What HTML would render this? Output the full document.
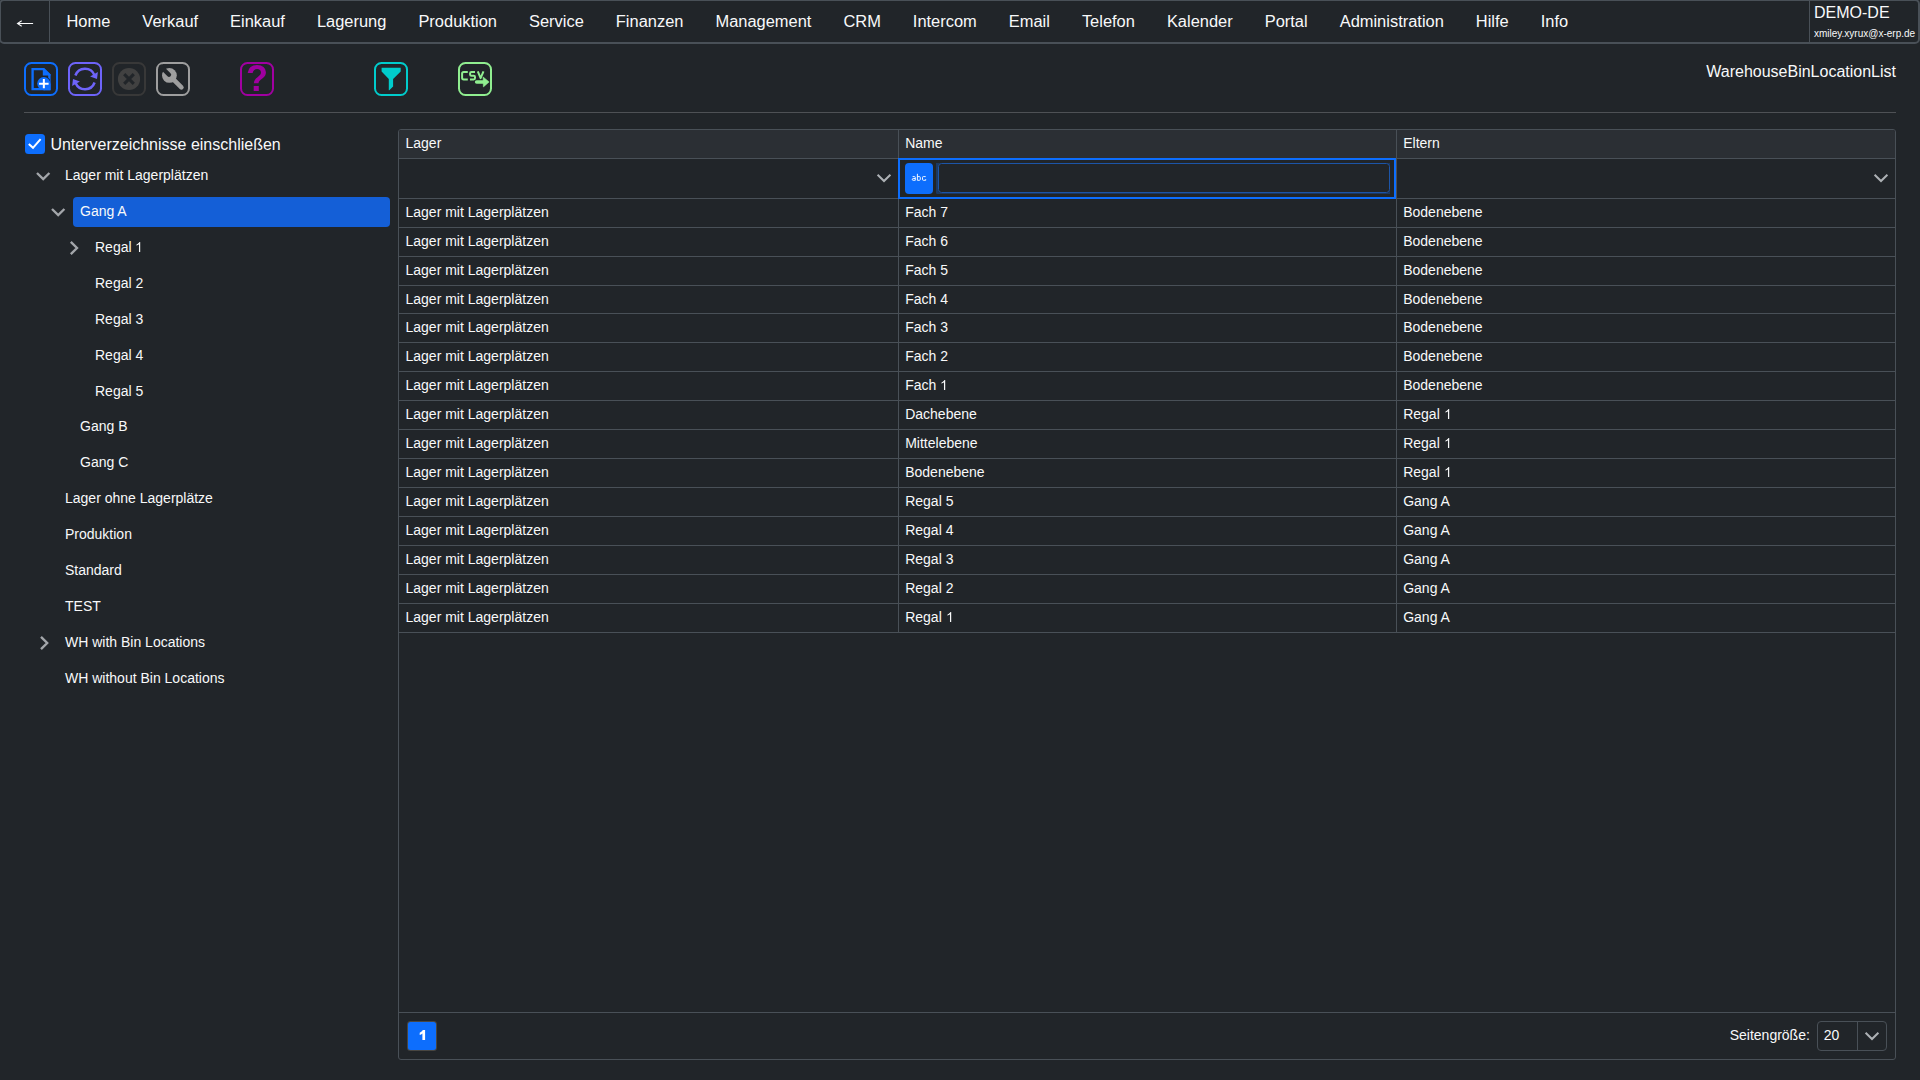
<!DOCTYPE html>
<html lang="de">
<head>
<meta charset="utf-8">
<title>WarehouseBinLocationList</title>
<style>
*{box-sizing:border-box;margin:0;padding:0}
html,body{width:1920px;height:1080px;overflow:hidden;background:#212529;color:#f8f9fa;font-family:"Liberation Sans",sans-serif;font-size:16px}
body{position:relative}
.ab{position:absolute}
.t{position:absolute;white-space:nowrap;color:#f8f9fa}
.t14{font-size:14px;line-height:16px}
.t16{font-size:16px;line-height:18px}
#nav{position:absolute;left:-1px;top:-1px;width:1921px;height:45px;border:2px solid #495057;border-radius:5px}
.sep{position:absolute;top:0;width:1px;height:42px;background:#495057}
.m{position:absolute;top:11.5px;font-size:16.45px;line-height:19px;white-space:nowrap;color:#f8f9fa}
.tb{position:absolute;top:62px;width:34px;height:34px;border:2px solid;border-radius:7.5px}
.tb svg{position:absolute;left:-2px;top:-2px;width:34px;height:34px;overflow:visible}
.vl{position:absolute;width:1px;background:#495057}
.hl{position:absolute;height:1px;background:#495057}
</style>
</head>
<body>
<div id="nav"></div>
<div class="sep" style="left:49px"></div><div class="sep" style="left:1809px"></div>
<svg class="ab" style="left:0;top:0" width="60" height="44" viewBox="0 0 60 44"><path d="M17.6 23.5H33.1M21.7 20.7L17.5 23.5L21.7 26.3" fill="none" stroke="#f8f9fa" stroke-width="1.05"/></svg>
<div id="menu" class="ab" style="left:50.5px;top:0;display:flex">
<span style="display:block;padding:11.5px 16px 0 16px;font-size:16.45px;line-height:19px;white-space:nowrap">Home</span>
<span style="display:block;padding:11.5px 16px 0 16px;font-size:16.45px;line-height:19px;white-space:nowrap">Verkauf</span>
<span style="display:block;padding:11.5px 16px 0 16px;font-size:16.45px;line-height:19px;white-space:nowrap">Einkauf</span>
<span style="display:block;padding:11.5px 16px 0 16px;font-size:16.45px;line-height:19px;white-space:nowrap">Lagerung</span>
<span style="display:block;padding:11.5px 16px 0 16px;font-size:16.45px;line-height:19px;white-space:nowrap">Produktion</span>
<span style="display:block;padding:11.5px 16px 0 16px;font-size:16.45px;line-height:19px;white-space:nowrap">Service</span>
<span style="display:block;padding:11.5px 16px 0 16px;font-size:16.45px;line-height:19px;white-space:nowrap">Finanzen</span>
<span style="display:block;padding:11.5px 16px 0 16px;font-size:16.45px;line-height:19px;white-space:nowrap">Management</span>
<span style="display:block;padding:11.5px 16px 0 16px;font-size:16.45px;line-height:19px;white-space:nowrap">CRM</span>
<span style="display:block;padding:11.5px 16px 0 16px;font-size:16.45px;line-height:19px;white-space:nowrap">Intercom</span>
<span style="display:block;padding:11.5px 16px 0 16px;font-size:16.45px;line-height:19px;white-space:nowrap">Email</span>
<span style="display:block;padding:11.5px 16px 0 16px;font-size:16.45px;line-height:19px;white-space:nowrap">Telefon</span>
<span style="display:block;padding:11.5px 16px 0 16px;font-size:16.45px;line-height:19px;white-space:nowrap">Kalender</span>
<span style="display:block;padding:11.5px 16px 0 16px;font-size:16.45px;line-height:19px;white-space:nowrap">Portal</span>
<span style="display:block;padding:11.5px 16px 0 16px;font-size:16.45px;line-height:19px;white-space:nowrap">Administration</span>
<span style="display:block;padding:11.5px 16px 0 16px;font-size:16.45px;line-height:19px;white-space:nowrap">Hilfe</span>
<span style="display:block;padding:11.5px 16px 0 16px;font-size:16.45px;line-height:19px;white-space:nowrap">Info</span>
</div>
<div class="t t16" style="left:1814px;top:3.5px">DEMO-DE</div>
<div class="t" style="left:1814px;top:27.5px;font-size:10px;line-height:12px">xmiley.xyrux@x-erp.de</div>
<div class="tb" style="left:24px;border-color:#0d6efd"><svg viewBox="0 0 34 34"><defs><clipPath id="rc"><rect x="0" y="0" width="25.9" height="26.1"/></clipPath></defs>
<path d="M8.6 7.1H19.6L25.4 12.9V27.1H8.6Z" fill="none" stroke="#0d6efd" stroke-width="2.35" stroke-linejoin="miter"/>
<path d="M18.8 5.9H19.9L26.7 12.5V13.4H18.8Z" fill="#0d6efd"/>
<circle cx="19.8" cy="21.6" r="7.3" fill="#212529" clip-path="url(#rc)"/>
<circle cx="19.8" cy="21.6" r="6.6" fill="#0d6efd"/>
<path d="M19.8 28.35H26.65V21.6Z" fill="#0d6efd"/>
<path d="M15.1 21.65H24.6M19.85 17V26.2" stroke="#fff" stroke-width="2" fill="none"/></svg></div>
<div class="tb" style="left:68px;border-color:#6e64fa"><svg viewBox="0 0 34 34"><path d="M7.4 13.5A10.2 10.2 0 0 1 26.4 13" fill="none" stroke="#6e64fa" stroke-width="2.5"/>
<path d="M22.1 14.4L29.85 10.1L29 17Z" fill="#6e64fa"/>
<path d="M26.6 20.5A10.2 10.2 0 0 1 7.6 21" fill="none" stroke="#6e64fa" stroke-width="2.5"/>
<path d="M11.9 19.6L4.15 23.9L5 17Z" fill="#6e64fa"/></svg></div>
<div class="tb" style="left:112px;border-color:#383838"><svg viewBox="0 0 34 34"><circle cx="17" cy="17" r="11.1" fill="#414141"/>
<path d="M12.2 12.2L21.8 21.8M21.8 12.2L12.2 21.8" stroke="#212529" stroke-width="3.1" fill="none"/></svg></div>
<div class="tb" style="left:156px;border-color:#9e9e9e"><svg viewBox="0 0 34 34"><path d="M13.4 13.4L25.4 25.4" stroke="#9e9e9e" stroke-width="4.6" stroke-linecap="round" fill="none"/>
<circle cx="13.4" cy="13.4" r="7.4" fill="#9e9e9e"/>
<path d="M13 12.8L5 4.8" stroke="#212529" stroke-width="4.3" stroke-linecap="round" fill="none"/></svg></div>
<div class="tb" style="left:240px;border-color:#a100a1"></div>
<div class="t" style="left:240px;top:58.55px;width:34px;text-align:center;font-size:36px;line-height:40px;font-weight:bold;color:#a100a1;opacity:.999;will-change:opacity">?</div>
<div class="tb" style="left:374px;border-color:#00cccc"><svg viewBox="0 0 34 34"><path d="M7.6 5.7H26.7V9.4L19.1 17V24.6L15.3 28.2H14.8V17L7.6 9.4Z" fill="#00cccc"/></svg></div>
<div class="tb" style="left:458px;border-color:#90ee90"><svg viewBox="0 0 34 34"><path d="M9.8 10H5.7Q4.1 10 4.1 11.6V15.8Q4.1 17.4 5.7 17.4H9.8" fill="none" stroke="#90ee90" stroke-width="2"/>
<path d="M17 10H13.4Q12.1 10 12.1 11.3V12.4Q12.1 13.7 13.4 13.7H15.7Q17 13.7 17 15V16.1Q17 17.4 15.7 17.4H12" fill="none" stroke="#90ee90" stroke-width="2"/>
<path d="M19.8 9.3L22.6 16.1L25.5 9.3" fill="none" stroke="#90ee90" stroke-width="2" stroke-linejoin="round"/>
<path d="M18.6 20H25.4" stroke="#90ee90" stroke-width="3.5" stroke-linecap="round" fill="none"/>
<path d="M25.1 15L31.1 19.9L25.4 24.9Z" fill="#90ee90" stroke="#90ee90" stroke-width="0.6" stroke-linejoin="round"/></svg></div>
<div class="t t16" style="right:24px;top:63px">WarehouseBinLocationList</div>
<div class="hl" style="left:24px;top:112px;width:1872px;background:#4e5155"></div>
<div class="ab" style="left:25px;top:134px;width:20px;height:20px;border-radius:3.5px;background:#0d6efd"></div>
<svg class="ab" style="left:25px;top:134px" width="20" height="20" viewBox="0 0 20 20"><path d="M3.8 9.9L8 13.8L15.6 5.2" fill="none" stroke="#fff" stroke-width="2"/></svg>
<div class="t" style="left:50.4px;top:136px;font-size:16px;line-height:18px">Unterverzeichnisse einschließen</div>
<div class="ab" style="left:73px;top:197px;width:317px;height:30px;border-radius:4px;background:#145fd7"></div>
<div class="t t14" style="left:65px;top:167px">Lager mit Lagerplätzen</div>
<div class="t t14" style="left:80px;top:203px">Gang A</div>
<div class="t t14" style="left:95px;top:239px">Regal <svg style="display:inline-block;width:7.78px;height:11px;vertical-align:baseline;position:relative;top:.15px;overflow:visible" viewBox="0 -11 7.78 11"><path d="M5.216 0H3.985V-7.84Q3.54-7.417 2.82-6.993Q2.099-6.57 1.524-6.357V-7.547Q2.557-8.03 3.329-8.72Q4.1-9.41 4.423-10.06H5.216Z" fill="#f8f9fa"/></svg></div>
<div class="t t14" style="left:95px;top:275px">Regal 2</div>
<div class="t t14" style="left:95px;top:311px">Regal 3</div>
<div class="t t14" style="left:95px;top:347px">Regal 4</div>
<div class="t t14" style="left:95px;top:383px">Regal 5</div>
<div class="t t14" style="left:80px;top:418px">Gang B</div>
<div class="t t14" style="left:80px;top:454px">Gang C</div>
<div class="t t14" style="left:65px;top:490px">Lager ohne Lagerplätze</div>
<div class="t t14" style="left:65px;top:526px">Produktion</div>
<div class="t t14" style="left:65px;top:562px">Standard</div>
<div class="t t14" style="left:65px;top:598px">TEST</div>
<div class="t t14" style="left:65px;top:634px">WH with Bin Locations</div>
<div class="t t14" style="left:65px;top:670px">WH without Bin Locations</div>
<svg class="ab" style="left:0;top:120px" width="400" height="600" viewBox="0 120 400 600"><path d="M37.0 173.0L43.2 179.2L49.400000000000006 173.0" fill="none" stroke="#a3a6aa" stroke-width="2.35"/><path d="M52.0 209.0L58.2 215.2L64.4 209.0" fill="none" stroke="#a3a6aa" stroke-width="2.35"/><path d="M70.8 241.8L77 248L70.8 254.2" fill="none" stroke="#a3a6aa" stroke-width="2.35"/><path d="M41.0 636.8L47.2 643L41.0 649.2" fill="none" stroke="#a3a6aa" stroke-width="2.35"/></svg>
<div class="ab" style="left:398px;top:129px;width:1498px;height:931px;border:1px solid #495057;border-radius:3px"></div>
<div class="ab" style="left:399px;top:130px;width:1496px;height:28px;background:#2b2f34;border-radius:2px 2px 0 0"></div>
<div class="hl" style="left:399px;top:158px;width:1496px"></div>
<div class="hl" style="left:399px;top:198px;width:1496px"></div>
<div class="hl" style="left:399px;top:227px;width:1496px"></div>
<div class="hl" style="left:399px;top:256px;width:1496px"></div>
<div class="hl" style="left:399px;top:285px;width:1496px"></div>
<div class="hl" style="left:399px;top:313px;width:1496px"></div>
<div class="hl" style="left:399px;top:342px;width:1496px"></div>
<div class="hl" style="left:399px;top:371px;width:1496px"></div>
<div class="hl" style="left:399px;top:400px;width:1496px"></div>
<div class="hl" style="left:399px;top:429px;width:1496px"></div>
<div class="hl" style="left:399px;top:458px;width:1496px"></div>
<div class="hl" style="left:399px;top:487px;width:1496px"></div>
<div class="hl" style="left:399px;top:516px;width:1496px"></div>
<div class="hl" style="left:399px;top:545px;width:1496px"></div>
<div class="hl" style="left:399px;top:574px;width:1496px"></div>
<div class="hl" style="left:399px;top:603px;width:1496px"></div>
<div class="hl" style="left:399px;top:632px;width:1496px"></div>
<div class="hl" style="left:399px;top:1012px;width:1496px"></div>
<div class="vl" style="left:898px;top:130px;height:503px"></div>
<div class="vl" style="left:1396px;top:130px;height:503px"></div>
<div class="t t14" style="left:405.5px;top:135px">Lager</div>
<div class="t t14" style="left:905.2px;top:135px">Name</div>
<div class="t t14" style="left:1403.2px;top:135px">Eltern</div>
<div class="t t14" style="left:405.5px;top:204px">Lager mit Lagerplätzen</div><div class="t t14" style="left:905.2px;top:204px">Fach 7</div><div class="t t14" style="left:1403.2px;top:204px">Bodenebene</div>
<div class="t t14" style="left:405.5px;top:233px">Lager mit Lagerplätzen</div><div class="t t14" style="left:905.2px;top:233px">Fach 6</div><div class="t t14" style="left:1403.2px;top:233px">Bodenebene</div>
<div class="t t14" style="left:405.5px;top:262px">Lager mit Lagerplätzen</div><div class="t t14" style="left:905.2px;top:262px">Fach 5</div><div class="t t14" style="left:1403.2px;top:262px">Bodenebene</div>
<div class="t t14" style="left:405.5px;top:291px">Lager mit Lagerplätzen</div><div class="t t14" style="left:905.2px;top:291px">Fach 4</div><div class="t t14" style="left:1403.2px;top:291px">Bodenebene</div>
<div class="t t14" style="left:405.5px;top:319px">Lager mit Lagerplätzen</div><div class="t t14" style="left:905.2px;top:319px">Fach 3</div><div class="t t14" style="left:1403.2px;top:319px">Bodenebene</div>
<div class="t t14" style="left:405.5px;top:348px">Lager mit Lagerplätzen</div><div class="t t14" style="left:905.2px;top:348px">Fach 2</div><div class="t t14" style="left:1403.2px;top:348px">Bodenebene</div>
<div class="t t14" style="left:405.5px;top:377px">Lager mit Lagerplätzen</div><div class="t t14" style="left:905.2px;top:377px">Fach <svg style="display:inline-block;width:7.78px;height:11px;vertical-align:baseline;position:relative;top:.15px;overflow:visible" viewBox="0 -11 7.78 11"><path d="M5.216 0H3.985V-7.84Q3.54-7.417 2.82-6.993Q2.099-6.57 1.524-6.357V-7.547Q2.557-8.03 3.329-8.72Q4.1-9.41 4.423-10.06H5.216Z" fill="#f8f9fa"/></svg></div><div class="t t14" style="left:1403.2px;top:377px">Bodenebene</div>
<div class="t t14" style="left:405.5px;top:406px">Lager mit Lagerplätzen</div><div class="t t14" style="left:905.2px;top:406px">Dachebene</div><div class="t t14" style="left:1403.2px;top:406px">Regal <svg style="display:inline-block;width:7.78px;height:11px;vertical-align:baseline;position:relative;top:.15px;overflow:visible" viewBox="0 -11 7.78 11"><path d="M5.216 0H3.985V-7.84Q3.54-7.417 2.82-6.993Q2.099-6.57 1.524-6.357V-7.547Q2.557-8.03 3.329-8.72Q4.1-9.41 4.423-10.06H5.216Z" fill="#f8f9fa"/></svg></div>
<div class="t t14" style="left:405.5px;top:435px">Lager mit Lagerplätzen</div><div class="t t14" style="left:905.2px;top:435px">Mittelebene</div><div class="t t14" style="left:1403.2px;top:435px">Regal <svg style="display:inline-block;width:7.78px;height:11px;vertical-align:baseline;position:relative;top:.15px;overflow:visible" viewBox="0 -11 7.78 11"><path d="M5.216 0H3.985V-7.84Q3.54-7.417 2.82-6.993Q2.099-6.57 1.524-6.357V-7.547Q2.557-8.03 3.329-8.72Q4.1-9.41 4.423-10.06H5.216Z" fill="#f8f9fa"/></svg></div>
<div class="t t14" style="left:405.5px;top:464px">Lager mit Lagerplätzen</div><div class="t t14" style="left:905.2px;top:464px">Bodenebene</div><div class="t t14" style="left:1403.2px;top:464px">Regal <svg style="display:inline-block;width:7.78px;height:11px;vertical-align:baseline;position:relative;top:.15px;overflow:visible" viewBox="0 -11 7.78 11"><path d="M5.216 0H3.985V-7.84Q3.54-7.417 2.82-6.993Q2.099-6.57 1.524-6.357V-7.547Q2.557-8.03 3.329-8.72Q4.1-9.41 4.423-10.06H5.216Z" fill="#f8f9fa"/></svg></div>
<div class="t t14" style="left:405.5px;top:493px">Lager mit Lagerplätzen</div><div class="t t14" style="left:905.2px;top:493px">Regal 5</div><div class="t t14" style="left:1403.2px;top:493px">Gang A</div>
<div class="t t14" style="left:405.5px;top:522px">Lager mit Lagerplätzen</div><div class="t t14" style="left:905.2px;top:522px">Regal 4</div><div class="t t14" style="left:1403.2px;top:522px">Gang A</div>
<div class="t t14" style="left:405.5px;top:551px">Lager mit Lagerplätzen</div><div class="t t14" style="left:905.2px;top:551px">Regal 3</div><div class="t t14" style="left:1403.2px;top:551px">Gang A</div>
<div class="t t14" style="left:405.5px;top:580px">Lager mit Lagerplätzen</div><div class="t t14" style="left:905.2px;top:580px">Regal 2</div><div class="t t14" style="left:1403.2px;top:580px">Gang A</div>
<div class="t t14" style="left:405.5px;top:609px">Lager mit Lagerplätzen</div><div class="t t14" style="left:905.2px;top:609px">Regal <svg style="display:inline-block;width:7.78px;height:11px;vertical-align:baseline;position:relative;top:.15px;overflow:visible" viewBox="0 -11 7.78 11"><path d="M5.216 0H3.985V-7.84Q3.54-7.417 2.82-6.993Q2.099-6.57 1.524-6.357V-7.547Q2.557-8.03 3.329-8.72Q4.1-9.41 4.423-10.06H5.216Z" fill="#f8f9fa"/></svg></div><div class="t t14" style="left:1403.2px;top:609px">Gang A</div>
<svg class="ab" style="left:870px;top:168px" width="30" height="20" viewBox="870 168 30 20"><path d="M877.6 174.8L884 181L890.4 174.8" fill="none" stroke="#adb1b5" stroke-width="2"/></svg>
<svg class="ab" style="left:1866px;top:168px" width="30" height="20" viewBox="1866 168 30 20"><path d="M1874.6 174.8L1881 181L1887.4 174.8" fill="none" stroke="#adb1b5" stroke-width="2"/></svg>
<div class="ab" style="left:898px;top:158px;width:498px;height:41px;border:2px solid #0d6efd;background:#212529"></div>
<div class="ab" style="left:905px;top:163px;width:28px;height:31px;border-radius:4px;background:#0d6efd"></div>
<svg class="ab" style="left:905px;top:163px" width="28" height="31" viewBox="905 163 28 31"><path d="M912.6 176.6H914.4Q915.3 176.6 915.3 177.5V180.3H913.1Q912.3 180.3 912.3 179.5Q912.3 178.5 913.2 178.5H915.3M917.4 173.8V180.3H919.4Q920.3 180.3 920.3 179.4V177.5Q920.3 176.6 919.4 176.6H917.4M925.7 176.6H923.4Q922.5 176.6 922.5 177.5V179.4Q922.5 180.3 923.4 180.3H925.7V179.2" fill="none" stroke="#fff" stroke-width="1" stroke-opacity=".92"/></svg>
<div class="ab" style="left:936px;top:163px;width:454px;height:31px;overflow:hidden"><div class="ab" style="left:2px;top:0;width:452px;height:30px;border:1px solid #1c55a8;border-radius:3.5px;box-shadow:0 0 0 3px rgba(13,110,253,.28)"></div></div>
<div class="ab" style="left:408px;top:1022px;width:28px;height:28px;border-radius:2.5px;background:#0d6efd;box-shadow:0 0 0 1px rgba(120,110,95,.45)"></div>
<svg class="ab" style="left:408px;top:1022px" width="28" height="28" viewBox="408 1022 28 28"><path d="M425.1 1040H422.4V1033.4Q421.2 1034.5 419.7 1035V1032.7Q421.9 1031.9 422.9 1030H425.1Z" fill="#fff"/></svg>
<div class="t t14" style="left:1729.7px;top:1027px">Seitengröße:</div>
<div class="ab" style="left:1817px;top:1021px;width:70px;height:30px;border:1px solid #495057;border-radius:4px"></div>
<div class="vl" style="left:1857px;top:1022px;height:28px"></div>
<div class="t t14" style="left:1823.8px;top:1027px">20</div>
<svg class="ab" style="left:1860px;top:1026px" width="24" height="20" viewBox="1860 1026 24 20"><path d="M1865.6 1032.8L1872 1039L1878.4 1032.8" fill="none" stroke="#adb1b5" stroke-width="2"/></svg>
</body>
</html>
